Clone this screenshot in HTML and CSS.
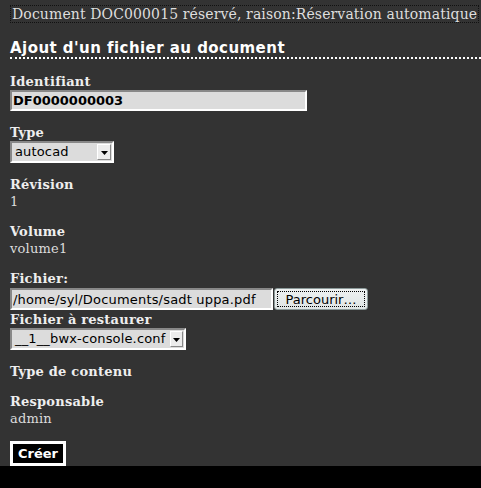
FILE: index.html
```html
<!DOCTYPE html>
<html lang="fr">
<head>
<meta charset="utf-8">
<title>Ajout d'un fichier au document</title>
<link rel="stylesheet" href="styles.css">
</head>
<body>
<div class="page">
  <div class="notice">Document DOC000015 réservé, raison:Réservation automatique</div>
  <h2 class="title">Ajout d'un fichier au document</h2>
  <form class="form">
    <div class="field">
      <label class="label">Identifiant</label>
      <input class="text-input id-input" type="text" value="DF0000000003">
    </div>
    <div class="field">
      <label class="label">Type</label>
      <div class="select select-type">
        <span class="select-text">autocad</span>
        <span class="select-arrow"><svg width="7" height="4" viewBox="0 0 7 4"><path d="M0 0H7L3.5 4Z" fill="#000"/></svg></span>
      </div>
    </div>
    <div class="field">
      <div class="label">Révision</div>
      <div class="value">1</div>
    </div>
    <div class="field">
      <div class="label">Volume</div>
      <div class="value">volume1</div>
    </div>
    <div class="field field-file">
      <label class="label">Fichier:</label>
      <div class="file-row">
        <input class="text-input file-input" type="text" value="/home/syl/Documents/sadt uppa.pdf">
        <button class="browse" type="button">Parcourir…</button>
      </div>
    </div>
    <div class="field">
      <label class="label">Fichier à restaurer</label>
      <div class="select select-restore">
        <span class="select-text">__1__bwx-console.conf</span>
        <span class="select-arrow"><svg width="7" height="4" viewBox="0 0 7 4"><path d="M0 0H7L3.5 4Z" fill="#000"/></svg></span>
      </div>
    </div>
    <div class="field">
      <div class="label">Type de contenu</div>
    </div>
    <div class="field field-last">
      <div class="label">Responsable</div>
      <div class="value">admin</div>
    </div>
    <button class="create" type="submit">Créer</button>
  </form>
</div>
</body>
</html>
```

FILE: styles.css
```css
html {
  background: #000;
}

body {
  margin: 0;
  font-family: "DejaVu Serif", serif;
  font-size: 13px;
  color: #dcdcdc;
}

.page {
  background: #333333;
  padding: 5px 0 0 10px;
}

.notice {
  width: fit-content;
  white-space: nowrap;
  border: 1px dotted #111;
  font-size: 14px;
  line-height: 16px;
  letter-spacing: 0.12px;
  padding: 0 1px;
  color: #dedede;
}

.title {
  margin: 16px 0 14px;
  font: bold 15px/18px "DejaVu Sans", sans-serif;
  letter-spacing: 0.45px;
  color: #fff;
  border-bottom: 2px dotted #fff;
}

.form {
  display: flex;
  flex-direction: column;
  align-items: flex-start;
  padding-bottom: 0;
}

.field {
  line-height: 17px;
  margin-bottom: 13px;
}

.field-file {
  margin-bottom: 0;
}

.field-last {
  margin-bottom: 14px;
}

.label {
  display: block;
  font-weight: bold;
  letter-spacing: 0.22px;
  color: #eeeeee;
}

.value {
  letter-spacing: 0.2px;
  color: #dcdcdc;
}

.text-input {
  display: block;
  box-sizing: border-box;
  margin: 0;
  border: 2px solid;
  border-color: #888 #fff #fff #888;
  background: #dcdcdc;
  color: #000;
  font: 13px "DejaVu Sans", sans-serif;
  padding: 0 1px;
  outline: none;
}

.id-input {
  width: 297px;
  height: 21px;
  font-weight: bold;
}

.select {
  display: flex;
  box-sizing: border-box;
  height: 22px;
  border: 2px solid;
  border-color: #888 #fff #fff #888;
  background: #dcdcdc;
  padding: 1px;
  font: 13px/16px "DejaVu Sans", sans-serif;
  letter-spacing: 0.15px;
  color: #000;
}

.select-type {
  width: 104px;
}

.select-restore {
  width: 176px;
}

.select-text {
  flex: 1;
  overflow: hidden;
  white-space: nowrap;
  padding-left: 2px;
}

.select-arrow {
  box-sizing: border-box;
  width: 14px;
  border: 1px solid;
  border-color: #fff #888 #888 #fff;
  background: #ececec;
  display: flex;
  align-items: center;
  justify-content: center;
  padding-top: 2px;
}

.select-restore .select-arrow {
  width: 13px;
}

.file-row {
  display: flex;
  gap: 1px;
  margin: 1px 0 1px;
}

.file-input {
  width: 263px;
  height: 22px;
  letter-spacing: 0.18px;
}

.browse {
  box-sizing: border-box;
  width: 94px;
  height: 22px;
  margin: 0;
  padding: 0;
  border: 1px solid #8c9a9a;
  border-radius: 3px;
  background: linear-gradient(#eef1f1, #dfe5e5);
  color: #000;
  font: 13px "DejaVu Sans", sans-serif;
  outline: 1px dotted #000;
  outline-offset: -4px;
}

.create {
  box-sizing: border-box;
  height: 25px;
  margin: 0;
  padding: 0 5px;
  border: 3px solid #fff;
  background: #000;
  color: #fff;
  font: bold 13px/15px "DejaVu Sans", sans-serif;
}
```
